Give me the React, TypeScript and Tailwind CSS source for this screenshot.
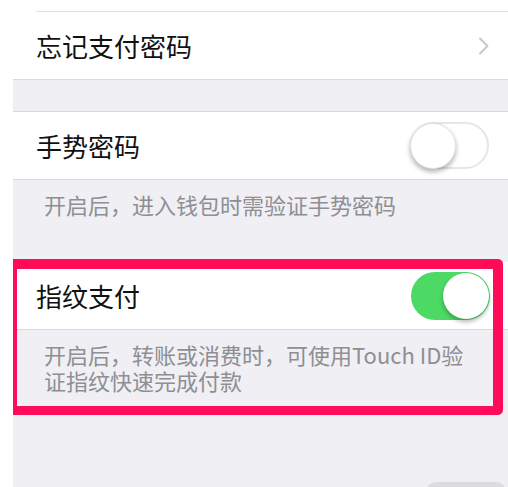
import React from "react";

const font = { fontFamily: '"Noto Sans CJK SC", "Noto Sans", sans-serif' };

function Switch({ on }: { on: boolean }) {
  if (on) {
    return (
      <div className="relative w-[79px] h-[48px] rounded-full bg-[#4cd964]">
        <div className="absolute right-[1px] top-[1px] w-[46px] h-[46px] rounded-full bg-white shadow-[0_3px_4px_rgba(0,0,0,0.28)]" />
      </div>
    );
  }
  return (
    <div className="relative w-[79px] h-[47px] rounded-full bg-white border-2 border-[#e6e6ea]">
      <div className="absolute left-[-2px] top-[-1px] w-[46px] h-[46px] rounded-full bg-white shadow-[0_3px_5px_rgba(0,0,0,0.3)] border border-[#e2e2e2]" />
    </div>
  );
}

export default function App() {
  return (
    <div className="w-[508px] h-[487px] bg-white flex overflow-hidden" style={font}>
      <div className="w-[13px] shrink-0 bg-white" />
      <div className="relative flex-1 h-[487px] overflow-hidden bg-[#efeff4] flex flex-col">
        {/* group 1 */}
        <div className="bg-white">
          <div className="h-[11px]" />
          <div className="ml-[23px] h-px bg-[#e0e0e4]" />
          <div className="h-[67px] flex items-center pl-[23px] pr-[18px]">
            <span className="text-[26px] leading-none text-[#111]">忘记支付密码</span>
            <svg className="ml-auto" width="12" height="18" viewBox="0 0 12 18" fill="none">
              <path d="M2 1.5 L9.5 9 L2 16.5" stroke="#c7c7cc" strokeWidth="2" strokeLinecap="round" strokeLinejoin="round" />
            </svg>
          </div>
        </div>
        <div className="h-px bg-[#d9d9de]" />
        <div className="h-[31px]" />
        <div className="h-px bg-[#d9d9de]" />
        {/* group 2 */}
        <div className="h-[67px] bg-white flex items-center pl-[23px] pr-[19px]">
          <span className="text-[26px] leading-none text-[#111]">手势密码</span>
          <div className="ml-auto">
            <Switch on={false} />
          </div>
        </div>
        <div className="h-px bg-[#d9d9de]" />
        <div className="h-[82px] pt-[11px] pl-[31px]">
          <p className="text-[22px] leading-[27px] text-[#8e8e93]">开启后，进入钱包时需验证手势密码</p>
        </div>
        {/* group 3 */}
        <div className="h-[67px] bg-white flex items-center pl-[23px] pr-[18px]">
          <span className="text-[26px] leading-none text-[#111]">指纹支付</span>
          <div className="ml-auto">
            <Switch on={true} />
          </div>
        </div>
        <div className="h-px bg-[#d9d9de]" />
        <div className="pt-[11px] pl-[31px] pr-[20px] flex flex-col">
          <span className="text-[22px] leading-[26px] text-[#8e8e93]">开启后，转账或消费时，可使用Touch ID验</span>
          <span className="text-[22px] leading-[26px] text-[#8e8e93]">证指纹快速完成付款</span>
        </div>
        <div className="flex-1" />
        <div className="flex justify-end pr-[2px]">
          <div className="w-[80px] h-[10px] rounded-t-full bg-[#dcdce0] mb-[-5px]" />
        </div>

        {/* annotation box */}
        <div className="absolute left-0 top-[259px] w-[490px] h-[156px] border-[#fe0c59] border-t-[10px] border-r-[10px] border-b-[9px] border-l-[4px] rounded-r-[5px]" />
      </div>
    </div>
  );
}
